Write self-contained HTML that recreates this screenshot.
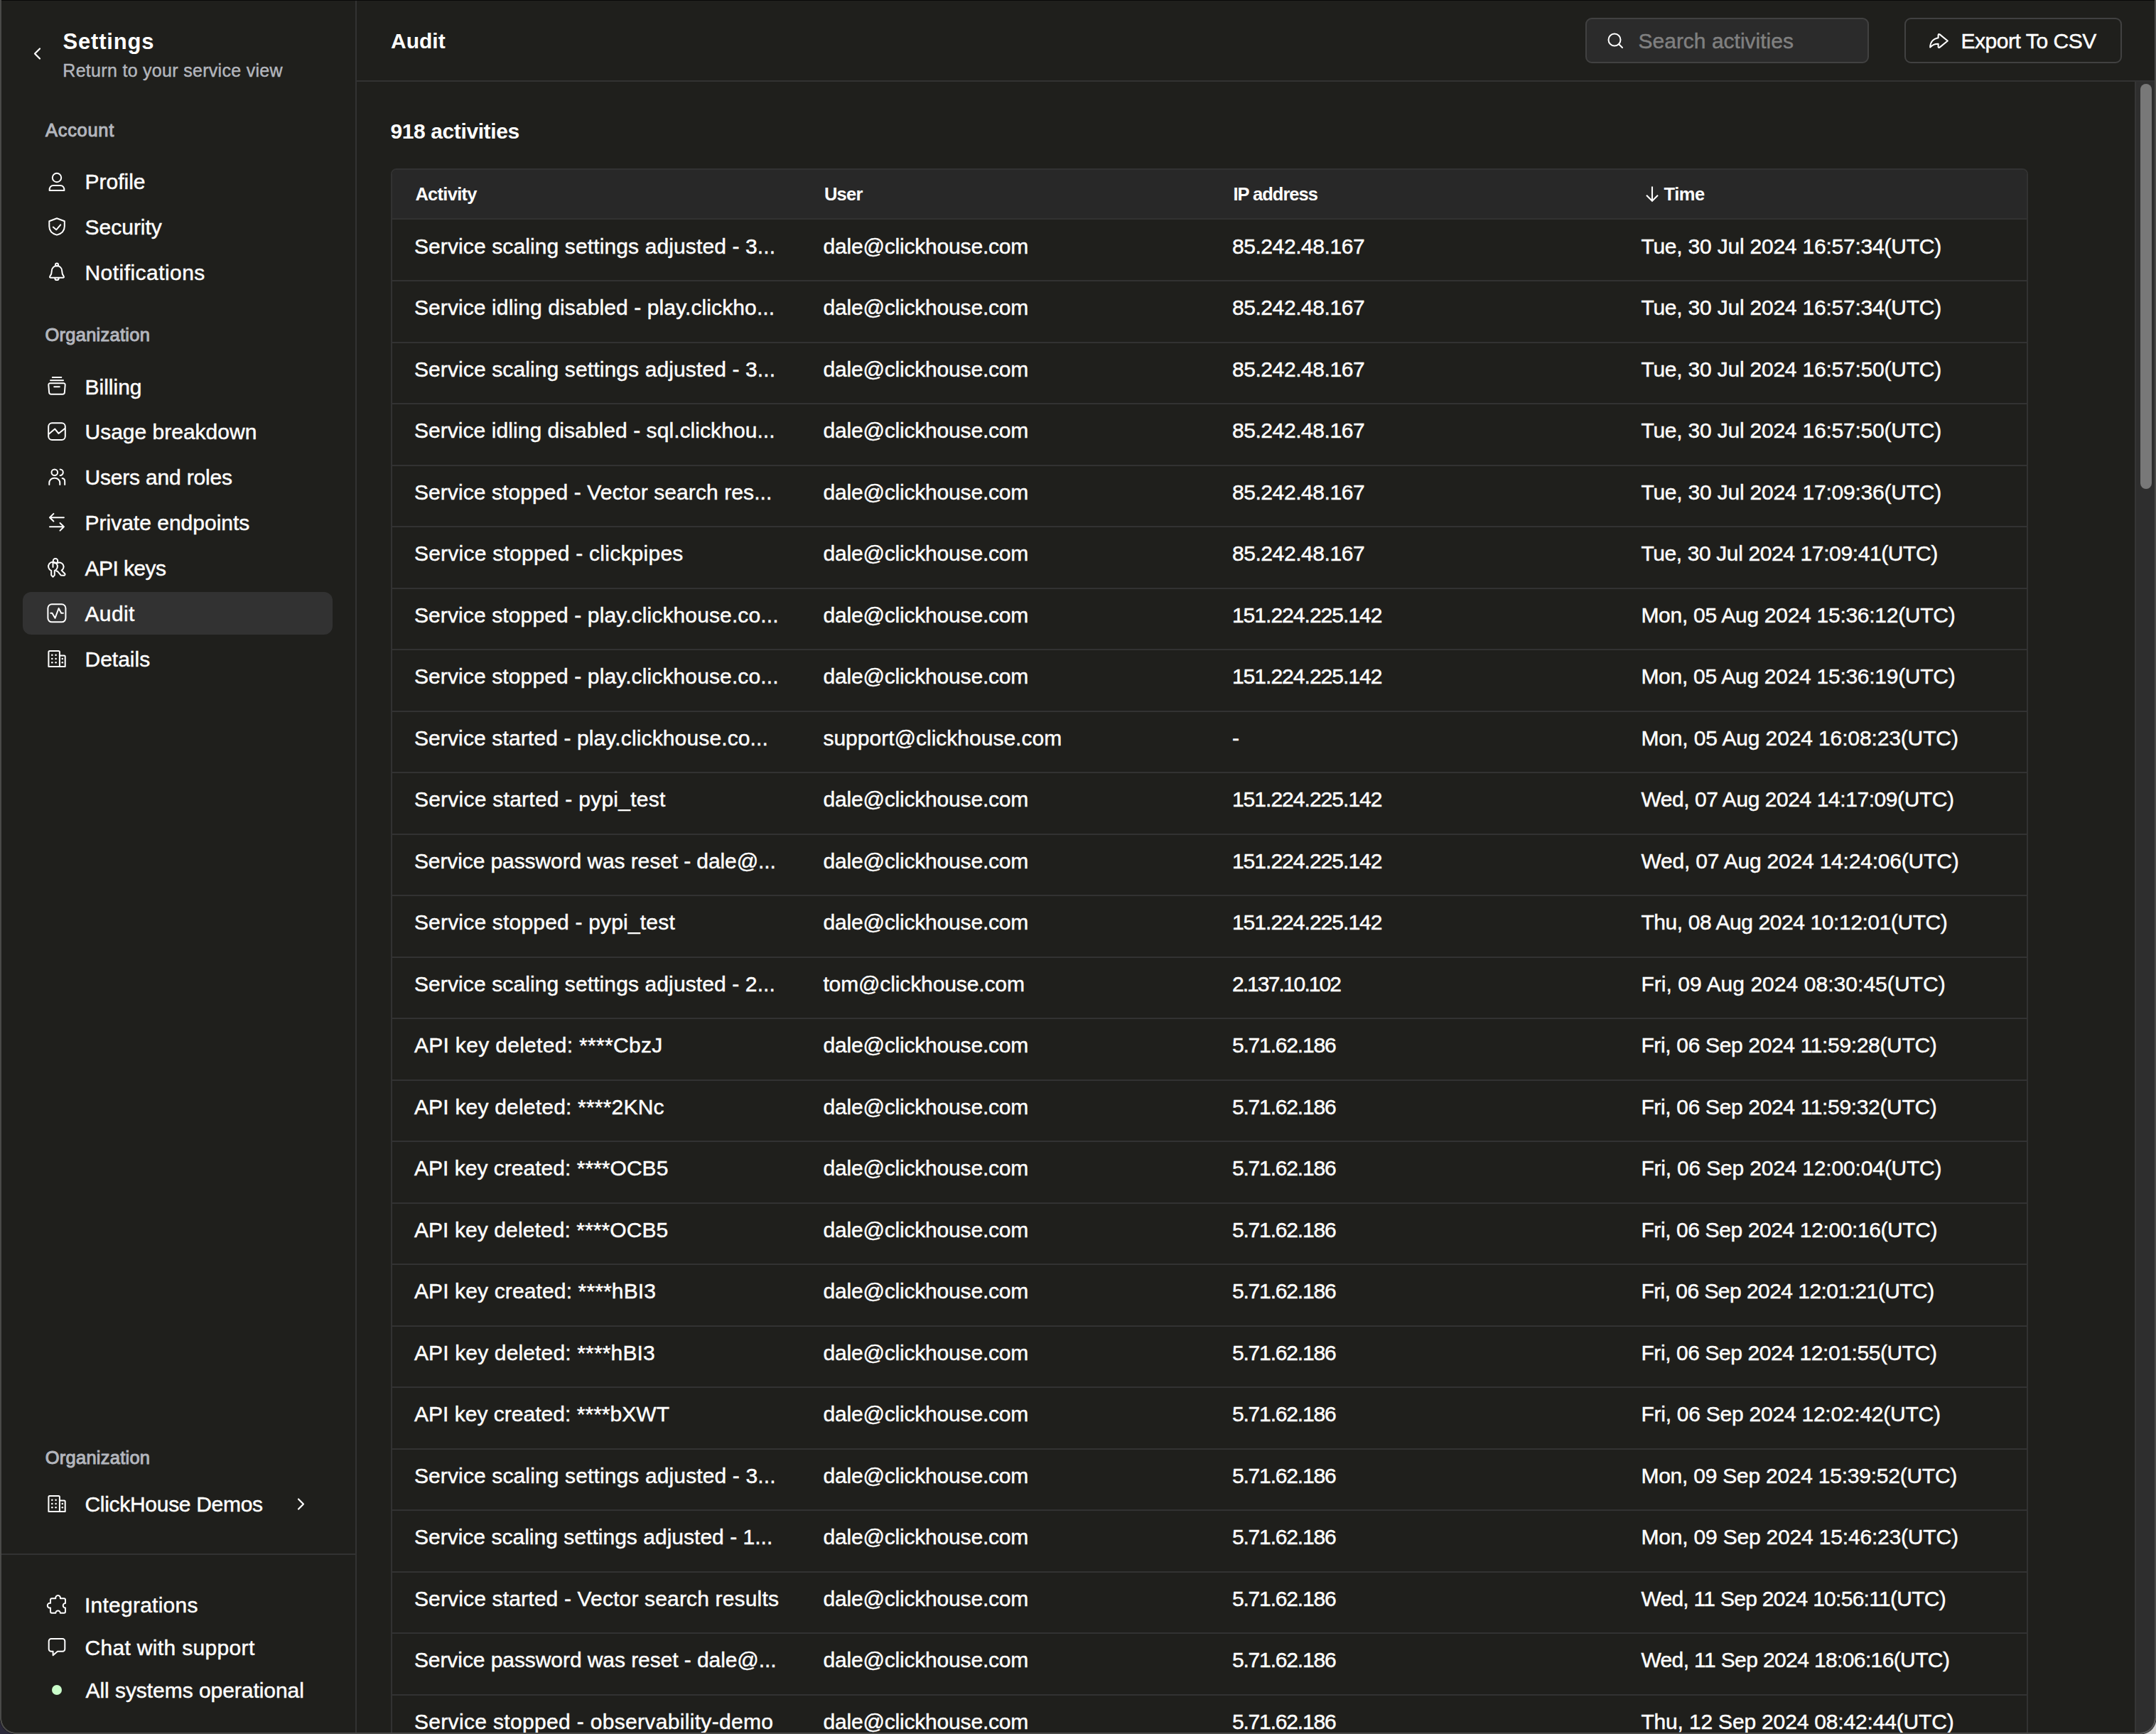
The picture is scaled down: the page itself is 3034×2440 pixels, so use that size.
<!DOCTYPE html>
<html><head><meta charset="utf-8"><style>
html,body{margin:0;padding:0;}
body{width:3034px;height:2440px;position:relative;overflow:hidden;background:#1f1f1c;font-family:"Liberation Sans", sans-serif;}
.t{position:absolute;white-space:nowrap;}
.a{position:absolute;}
svg{position:absolute;overflow:visible;}
</style></head><body>
<div class="a" style="left:500px;top:0;width:2px;height:2440px;background:#323232"></div>
<div class="a" style="left:502px;top:113px;width:2531px;height:2px;background:#323232"></div>
<svg style="left:47px;top:67px" width="11" height="17" viewBox="0 0 11 17"><path d="M9 1.5 L2 8.5 L9 15.5" fill="none" stroke="#fff" stroke-width="2.2" stroke-linecap="round" stroke-linejoin="round"/></svg>
<div class="t" style="left:88.50px;top:38.75px;font-size:31px;line-height:39px;font-weight:700;color:#fff;letter-spacing:0.8px;">Settings</div>
<div class="t" style="left:88.30px;top:83.83px;font-size:25px;line-height:31px;font-weight:400;color:#b3b6bd;letter-spacing:0.3px;-webkit-text-stroke:0.45px #b3b6bd;">Return to your service view</div>
<div class="t" style="left:64.00px;top:167.16px;font-size:25.5px;line-height:32px;font-weight:400;color:#b3b6bd;letter-spacing:0.7px;-webkit-text-stroke:0.45px #b3b6bd;-webkit-text-stroke:1px #b3b6bd;">Account</div>
<div class="t" style="left:119.50px;top:237.10px;font-size:30px;line-height:38px;font-weight:400;color:#fff;letter-spacing:0px;-webkit-text-stroke:0.45px #fff;">Profile</div>
<div class="t" style="left:119.50px;top:301.10px;font-size:30px;line-height:38px;font-weight:400;color:#fff;letter-spacing:0px;-webkit-text-stroke:0.45px #fff;">Security</div>
<div class="t" style="left:119.50px;top:365.10px;font-size:30px;line-height:38px;font-weight:400;color:#fff;letter-spacing:0.45px;-webkit-text-stroke:0.45px #fff;">Notifications</div>
<div class="t" style="left:63.50px;top:455.16px;font-size:25.5px;line-height:32px;font-weight:400;color:#b3b6bd;letter-spacing:0.25px;-webkit-text-stroke:0.45px #b3b6bd;-webkit-text-stroke:1px #b3b6bd;">Organization</div>
<div class="a" style="left:32px;top:833px;width:436px;height:60px;background:#323232;border-radius:12px"></div>
<svg style="left:0;top:0" width="500" height="2440" viewBox="0 0 500 2440">
<g fill="none" stroke="#fff" stroke-width="2" stroke-linecap="round" stroke-linejoin="round">
<circle cx="80" cy="250" r="6.2"/>
<path d="M69.6 267.9 C69.4 263.6 71.4 261.1 75.4 261.1 H84.6 C88.6 261.1 90.6 263.6 90.4 267.9 Z"/>
<path d="M80 307.3 L90.8 311.2 V318.5 C90.8 325 86 329 80 330.6 C74 329 69.3 325 69.3 318.5 V311.2 Z"/>
<path d="M74.8 319.6 L79.2 323.3 L85.2 316.3"/>
<path d="M71.8 390.8 H88.2 Q90.9 390.8 89.5 388.5 C87.8 386.4 87.2 384.5 87.2 381.2 A7.2 7.2 0 0 0 72.8 381.2 C72.8 384.5 72.2 386.4 70.5 388.5 Q69.1 390.8 71.8 390.8 Z"/>
<path d="M77.3 391.2 A2.7 2.9 0 0 0 82.7 391.2"/>
<circle cx="80" cy="372.4" r="2"/>
<path d="M73.8 531 H86.3"/>
<path d="M71 535.2 H89"/>
<path d="M70.5 539.2 H89.5 A2.2 2.2 0 0 1 91.7 541.6 L90.9 552 A3 3 0 0 1 87.9 554.8 H72.1 A3 3 0 0 1 69.1 552 L68.3 541.6 A2.2 2.2 0 0 1 70.5 539.2 Z"/>
<path d="M76.2 544.2 H83.8"/>
<rect x="68.2" y="595.2" width="23.6" height="23.9" rx="5"/>
<path d="M69 610.6 L77.3 603.6 L82.5 610 L91.2 603"/>
<circle cx="76.8" cy="664.8" r="4.3"/>
<path d="M84.6 660.6 A4.2 4.2 0 0 1 84.6 669"/>
<path d="M69.3 682 V679.5 A6.8 6.8 0 0 1 76.1 672.7 H77.5 A6.8 6.8 0 0 1 84.3 679.5 V682"/>
<path d="M87.6 673 A4.3 4.3 0 0 1 91.2 677.4 V682"/>
<path d="M70 728.2 H89.9 M75.4 722.9 L70 728.2 L75.4 733.5"/>
<path d="M70 741.3 H89.9 M84.5 736 L89.9 741.3 L84.5 746.6"/>
<circle cx="78" cy="789.3" r="3.3"/>
<path d="M72.2 803 A6.4 6.4 0 1 1 76.8 803 V809.4 L74.5 811.8 L72.2 809.4 Z"/>
<path d="M74.5 791 V798"/>
<path d="M80.6 792.4 A5.8 5.8 0 1 1 86.6 802.6 L91.2 807.2 A1.6 1.6 0 0 1 89.6 809.8 L85.6 809.4 L81.6 804.6 Q80.5 803.6 79.2 803.6"/>
<rect x="67.4" y="850.3" width="25" height="25" rx="5.5"/>
<path d="M71.3 862.8 H73.4 L77.5 869.8 L82.6 856 L86.2 862.8 H88.9"/>
<path d="M68.4 938 V917.5 A1.5 1.5 0 0 1 69.9 916 H82.4 A1.5 1.5 0 0 1 83.9 917.5 V938 Z"/>
<path d="M83.9 922.5 H90.2 A1.5 1.5 0 0 1 91.7 924 V938 H83.9"/>
<path d="M68.4 2127 V2106.5 A1.5 1.5 0 0 1 69.9 2105 H82.4 A1.5 1.5 0 0 1 83.9 2106.5 V2127 Z"/>
<path d="M83.9 2111.5 H90.2 A1.5 1.5 0 0 1 91.7 2113 V2127 H83.9"/>
<path d="M73 2249.2 H78.3 A3.4 3.4 0 1 1 84.9 2249.2 H90 A2 2 0 0 1 92 2251.2 V2255.9 A3.3 3.3 0 0 0 92 2262.5 V2267.7 A2 2 0 0 1 90 2269.7 H84.9 A3.3 3.3 0 0 0 78.3 2269.7 H73 A2 2 0 0 1 71 2267.7 V2262.5 A3.4 3.4 0 1 1 71 2255.9 V2251.2 A2 2 0 0 1 73 2249.2 Z"/>
<path d="M72 2306 H88 A3.3 3.3 0 0 1 91.3 2309.3 V2320.5 A3.3 3.3 0 0 1 88 2323.8 H81 L74.6 2329.3 V2323.8 H72 A3.3 3.3 0 0 1 68.7 2320.5 V2309.3 A3.3 3.3 0 0 1 72 2306 Z"/>
</g>
<g fill="#fff">
<circle cx="73.3" cy="921.8" r="1.3"/><circle cx="78.6" cy="921.8" r="1.3"/>
<circle cx="73.3" cy="927" r="1.3"/><circle cx="78.6" cy="927" r="1.3"/>
<circle cx="73.3" cy="932.3" r="1.3"/><circle cx="78.6" cy="932.3" r="1.3"/>
<circle cx="87.8" cy="927" r="1.3"/><circle cx="87.8" cy="932.3" r="1.3"/>
<circle cx="73.3" cy="2110.8" r="1.3"/><circle cx="78.6" cy="2110.8" r="1.3"/>
<circle cx="73.3" cy="2116" r="1.3"/><circle cx="78.6" cy="2116" r="1.3"/>
<circle cx="73.3" cy="2121.3" r="1.3"/><circle cx="78.6" cy="2121.3" r="1.3"/>
<circle cx="87.8" cy="2116" r="1.3"/><circle cx="87.8" cy="2121.3" r="1.3"/>
</g>
</svg>
<div class="t" style="left:119.50px;top:525.60px;font-size:30px;line-height:38px;font-weight:400;color:#fff;letter-spacing:0px;-webkit-text-stroke:0.45px #fff;">Billing</div>
<div class="t" style="left:119.50px;top:589.10px;font-size:30px;line-height:38px;font-weight:400;color:#fff;letter-spacing:0px;-webkit-text-stroke:0.45px #fff;">Usage breakdown</div>
<div class="t" style="left:119.50px;top:652.60px;font-size:30px;line-height:38px;font-weight:400;color:#fff;letter-spacing:-0.19px;-webkit-text-stroke:0.45px #fff;">Users and roles</div>
<div class="t" style="left:119.50px;top:717.10px;font-size:30px;line-height:38px;font-weight:400;color:#fff;letter-spacing:0px;-webkit-text-stroke:0.45px #fff;">Private endpoints</div>
<div class="t" style="left:119.50px;top:781.10px;font-size:30px;line-height:38px;font-weight:400;color:#fff;letter-spacing:-0.57px;-webkit-text-stroke:0.45px #fff;">API keys</div>
<div class="t" style="left:119.50px;top:845.10px;font-size:30px;line-height:38px;font-weight:400;color:#fff;letter-spacing:0.35px;-webkit-text-stroke:0.45px #fff;">Audit</div>
<div class="t" style="left:119.50px;top:908.60px;font-size:30px;line-height:38px;font-weight:400;color:#fff;letter-spacing:0px;-webkit-text-stroke:0.45px #fff;">Details</div>
<div class="t" style="left:63.70px;top:2035.16px;font-size:25.5px;line-height:32px;font-weight:400;color:#b3b6bd;letter-spacing:0.25px;-webkit-text-stroke:0.45px #b3b6bd;-webkit-text-stroke:1px #b3b6bd;">Organization</div>
<div class="t" style="left:119.50px;top:2097.60px;font-size:30px;line-height:38px;font-weight:400;color:#fff;letter-spacing:-0.3px;-webkit-text-stroke:0.45px #fff;">ClickHouse Demos</div>
<svg style="left:418px;top:2108px" width="11" height="17" viewBox="0 0 11 17"><path d="M2 1.5 L9 8.5 L2 15.5" fill="none" stroke="#fff" stroke-width="2.2" stroke-linecap="round" stroke-linejoin="round"/></svg>
<div class="a" style="left:2px;top:2186px;width:498px;height:2px;background:#323232"></div>
<div class="t" style="left:119.00px;top:2239.60px;font-size:30px;line-height:38px;font-weight:400;color:#fff;letter-spacing:0.24px;-webkit-text-stroke:0.45px #fff;">Integrations</div>
<div class="t" style="left:119.50px;top:2300.10px;font-size:30px;line-height:38px;font-weight:400;color:#fff;letter-spacing:0.33px;-webkit-text-stroke:0.45px #fff;">Chat with support</div>
<div class="t" style="left:120.50px;top:2359.60px;font-size:30px;line-height:38px;font-weight:400;color:#fff;letter-spacing:-0.05px;-webkit-text-stroke:0.45px #fff;">All systems operational</div>
<div class="a" style="left:73px;top:2371px;width:14px;height:14px;border-radius:50%;background:#cafdca"></div>
<div class="t" style="left:550.00px;top:39.10px;font-size:30px;line-height:38px;font-weight:700;color:#fff;letter-spacing:0px;">Audit</div>
<div class="a" style="left:2231px;top:25px;width:399px;height:64px;box-sizing:border-box;border:2px solid #414141;background:#2b2b2b;border-radius:9px"></div>
<svg style="left:2262px;top:46px" width="24" height="24" viewBox="0 0 24 24"><circle cx="10" cy="10" r="8.5" fill="none" stroke="#fff" stroke-width="2"/><path d="M16.5 16.5 L21 21" stroke="#fff" stroke-width="2" stroke-linecap="round"/></svg>
<div class="t" style="left:2305.50px;top:39.10px;font-size:30px;line-height:38px;font-weight:400;color:#808080;letter-spacing:0px;-webkit-text-stroke:0.45px #808080;">Search activities</div>
<div class="a" style="left:2680px;top:25px;width:306px;height:64px;box-sizing:border-box;border:2px solid #414141;background:transparent;border-radius:9px"></div>
<svg style="left:0;top:0" width="3034" height="120" viewBox="0 0 3034 120"><path d="M2740.8 57.5 L2729.6 48.4 Q2727.6 47.2 2727.6 49.6 V53.3 C2720 54.5 2716.2 60 2716.2 66.5 C2719.5 63 2722.5 61.5 2727.6 61.7 V65.4 Q2727.6 67.8 2729.6 66.6 Z" fill="none" stroke="#fff" stroke-width="2.1" stroke-linejoin="round" stroke-linecap="round"/></svg>
<div class="t" style="left:2759.50px;top:39.10px;font-size:30px;line-height:38px;font-weight:400;color:#fff;letter-spacing:-0.45px;-webkit-text-stroke:0.45px #fff;">Export To CSV</div>
<div class="t" style="left:549.50px;top:166.10px;font-size:30px;line-height:38px;font-weight:700;color:#fff;letter-spacing:-0.4px;">918 activities</div>
<div class="a" style="left:550px;top:237px;width:2304px;height:2300px;box-sizing:border-box;border:2px solid #323232;border-radius:8px;overflow:hidden"><div class="a" style="left:0;top:0;right:0;height:68px;background:#282828;border-bottom:2px solid #323232"></div></div>
<div class="t" style="left:584.40px;top:257.36px;font-size:25.5px;line-height:32px;font-weight:700;color:#fff;letter-spacing:-0.72px;">Activity</div>
<div class="t" style="left:1159.90px;top:257.36px;font-size:25.5px;line-height:32px;font-weight:700;color:#fff;letter-spacing:-0.7px;">User</div>
<div class="t" style="left:1735.40px;top:257.36px;font-size:25.5px;line-height:32px;font-weight:700;color:#fff;letter-spacing:-1.0px;">IP address</div>
<svg style="left:0;top:0" width="3034" height="400" viewBox="0 0 3034 400"><path d="M2325 262.5 V282.5 M2317 274.8 L2325 282.8 L2333 274.8" fill="none" stroke="#fff" stroke-width="2.1" stroke-linecap="butt" stroke-linejoin="miter"/></svg>
<div class="t" style="left:2341.50px;top:257.36px;font-size:25.5px;line-height:32px;font-weight:700;color:#fff;letter-spacing:-0.45px;">Time</div>
<div class="a" style="left:552px;top:394.00px;width:2300px;height:2px;background:#323232"></div>
<div class="t" style="left:582.90px;top:327.60px;font-size:30px;line-height:38px;font-weight:400;color:#fff;letter-spacing:0.118px;-webkit-text-stroke:0.45px #fff;">Service scaling settings adjusted - 3...</div>
<div class="t" style="left:1158.40px;top:327.60px;font-size:30px;line-height:38px;font-weight:400;color:#fff;letter-spacing:-0.183px;-webkit-text-stroke:0.45px #fff;">dale@clickhouse.com</div>
<div class="t" style="left:1733.90px;top:327.60px;font-size:30px;line-height:38px;font-weight:400;color:#fff;letter-spacing:-0.417px;-webkit-text-stroke:0.45px #fff;">85.242.48.167</div>
<div class="t" style="left:2309.40px;top:327.60px;font-size:30px;line-height:38px;font-weight:400;color:#fff;letter-spacing:-0.214px;-webkit-text-stroke:0.45px #fff;">Tue, 30 Jul 2024 16:57:34(UTC)</div>
<div class="a" style="left:552px;top:480.50px;width:2300px;height:2px;background:#323232"></div>
<div class="t" style="left:582.90px;top:414.10px;font-size:30px;line-height:38px;font-weight:400;color:#fff;letter-spacing:0.105px;-webkit-text-stroke:0.45px #fff;">Service idling disabled - play.clickho...</div>
<div class="t" style="left:1158.40px;top:414.10px;font-size:30px;line-height:38px;font-weight:400;color:#fff;letter-spacing:-0.183px;-webkit-text-stroke:0.45px #fff;">dale@clickhouse.com</div>
<div class="t" style="left:1733.90px;top:414.10px;font-size:30px;line-height:38px;font-weight:400;color:#fff;letter-spacing:-0.417px;-webkit-text-stroke:0.45px #fff;">85.242.48.167</div>
<div class="t" style="left:2309.40px;top:414.10px;font-size:30px;line-height:38px;font-weight:400;color:#fff;letter-spacing:-0.214px;-webkit-text-stroke:0.45px #fff;">Tue, 30 Jul 2024 16:57:34(UTC)</div>
<div class="a" style="left:552px;top:567.00px;width:2300px;height:2px;background:#323232"></div>
<div class="t" style="left:582.90px;top:500.60px;font-size:30px;line-height:38px;font-weight:400;color:#fff;letter-spacing:0.118px;-webkit-text-stroke:0.45px #fff;">Service scaling settings adjusted - 3...</div>
<div class="t" style="left:1158.40px;top:500.60px;font-size:30px;line-height:38px;font-weight:400;color:#fff;letter-spacing:-0.183px;-webkit-text-stroke:0.45px #fff;">dale@clickhouse.com</div>
<div class="t" style="left:1733.90px;top:500.60px;font-size:30px;line-height:38px;font-weight:400;color:#fff;letter-spacing:-0.417px;-webkit-text-stroke:0.45px #fff;">85.242.48.167</div>
<div class="t" style="left:2309.40px;top:500.60px;font-size:30px;line-height:38px;font-weight:400;color:#fff;letter-spacing:-0.214px;-webkit-text-stroke:0.45px #fff;">Tue, 30 Jul 2024 16:57:50(UTC)</div>
<div class="a" style="left:552px;top:653.50px;width:2300px;height:2px;background:#323232"></div>
<div class="t" style="left:582.90px;top:587.10px;font-size:30px;line-height:38px;font-weight:400;color:#fff;letter-spacing:0.06px;-webkit-text-stroke:0.45px #fff;">Service idling disabled - sql.clickhou...</div>
<div class="t" style="left:1158.40px;top:587.10px;font-size:30px;line-height:38px;font-weight:400;color:#fff;letter-spacing:-0.183px;-webkit-text-stroke:0.45px #fff;">dale@clickhouse.com</div>
<div class="t" style="left:1733.90px;top:587.10px;font-size:30px;line-height:38px;font-weight:400;color:#fff;letter-spacing:-0.417px;-webkit-text-stroke:0.45px #fff;">85.242.48.167</div>
<div class="t" style="left:2309.40px;top:587.10px;font-size:30px;line-height:38px;font-weight:400;color:#fff;letter-spacing:-0.214px;-webkit-text-stroke:0.45px #fff;">Tue, 30 Jul 2024 16:57:50(UTC)</div>
<div class="a" style="left:552px;top:740.00px;width:2300px;height:2px;background:#323232"></div>
<div class="t" style="left:582.90px;top:673.60px;font-size:30px;line-height:38px;font-weight:400;color:#fff;letter-spacing:0.086px;-webkit-text-stroke:0.45px #fff;">Service stopped - Vector search res...</div>
<div class="t" style="left:1158.40px;top:673.60px;font-size:30px;line-height:38px;font-weight:400;color:#fff;letter-spacing:-0.183px;-webkit-text-stroke:0.45px #fff;">dale@clickhouse.com</div>
<div class="t" style="left:1733.90px;top:673.60px;font-size:30px;line-height:38px;font-weight:400;color:#fff;letter-spacing:-0.417px;-webkit-text-stroke:0.45px #fff;">85.242.48.167</div>
<div class="t" style="left:2309.40px;top:673.60px;font-size:30px;line-height:38px;font-weight:400;color:#fff;letter-spacing:-0.214px;-webkit-text-stroke:0.45px #fff;">Tue, 30 Jul 2024 17:09:36(UTC)</div>
<div class="a" style="left:552px;top:826.50px;width:2300px;height:2px;background:#323232"></div>
<div class="t" style="left:582.90px;top:760.10px;font-size:30px;line-height:38px;font-weight:400;color:#fff;letter-spacing:0.244px;-webkit-text-stroke:0.45px #fff;">Service stopped - clickpipes</div>
<div class="t" style="left:1158.40px;top:760.10px;font-size:30px;line-height:38px;font-weight:400;color:#fff;letter-spacing:-0.183px;-webkit-text-stroke:0.45px #fff;">dale@clickhouse.com</div>
<div class="t" style="left:1733.90px;top:760.10px;font-size:30px;line-height:38px;font-weight:400;color:#fff;letter-spacing:-0.417px;-webkit-text-stroke:0.45px #fff;">85.242.48.167</div>
<div class="t" style="left:2309.40px;top:760.10px;font-size:30px;line-height:38px;font-weight:400;color:#fff;letter-spacing:-0.386px;-webkit-text-stroke:0.45px #fff;">Tue, 30 Jul 2024 17:09:41(UTC)</div>
<div class="a" style="left:552px;top:913.00px;width:2300px;height:2px;background:#323232"></div>
<div class="t" style="left:582.90px;top:846.60px;font-size:30px;line-height:38px;font-weight:400;color:#fff;letter-spacing:0.121px;-webkit-text-stroke:0.45px #fff;">Service stopped - play.clickhouse.co...</div>
<div class="t" style="left:1158.40px;top:846.60px;font-size:30px;line-height:38px;font-weight:400;color:#fff;letter-spacing:-0.183px;-webkit-text-stroke:0.45px #fff;">dale@clickhouse.com</div>
<div class="t" style="left:1733.90px;top:846.60px;font-size:30px;line-height:38px;font-weight:400;color:#fff;letter-spacing:-0.971px;-webkit-text-stroke:0.45px #fff;">151.224.225.142</div>
<div class="t" style="left:2309.40px;top:846.60px;font-size:30px;line-height:38px;font-weight:400;color:#fff;letter-spacing:-0.276px;-webkit-text-stroke:0.45px #fff;">Mon, 05 Aug 2024 15:36:12(UTC)</div>
<div class="a" style="left:552px;top:999.50px;width:2300px;height:2px;background:#323232"></div>
<div class="t" style="left:582.90px;top:933.10px;font-size:30px;line-height:38px;font-weight:400;color:#fff;letter-spacing:0.121px;-webkit-text-stroke:0.45px #fff;">Service stopped - play.clickhouse.co...</div>
<div class="t" style="left:1158.40px;top:933.10px;font-size:30px;line-height:38px;font-weight:400;color:#fff;letter-spacing:-0.183px;-webkit-text-stroke:0.45px #fff;">dale@clickhouse.com</div>
<div class="t" style="left:1733.90px;top:933.10px;font-size:30px;line-height:38px;font-weight:400;color:#fff;letter-spacing:-0.971px;-webkit-text-stroke:0.45px #fff;">151.224.225.142</div>
<div class="t" style="left:2309.40px;top:933.10px;font-size:30px;line-height:38px;font-weight:400;color:#fff;letter-spacing:-0.276px;-webkit-text-stroke:0.45px #fff;">Mon, 05 Aug 2024 15:36:19(UTC)</div>
<div class="a" style="left:552px;top:1086.00px;width:2300px;height:2px;background:#323232"></div>
<div class="t" style="left:582.90px;top:1019.60px;font-size:30px;line-height:38px;font-weight:400;color:#fff;letter-spacing:0.132px;-webkit-text-stroke:0.45px #fff;">Service started - play.clickhouse.co...</div>
<div class="t" style="left:1158.40px;top:1019.60px;font-size:30px;line-height:38px;font-weight:400;color:#fff;letter-spacing:0.007px;-webkit-text-stroke:0.45px #fff;">support@clickhouse.com</div>
<div class="t" style="left:1733.90px;top:1019.60px;font-size:30px;line-height:38px;font-weight:400;color:#fff;letter-spacing:0px;-webkit-text-stroke:0.45px #fff;">-</div>
<div class="t" style="left:2309.40px;top:1019.60px;font-size:30px;line-height:38px;font-weight:400;color:#fff;letter-spacing:-0.131px;-webkit-text-stroke:0.45px #fff;">Mon, 05 Aug 2024 16:08:23(UTC)</div>
<div class="a" style="left:552px;top:1172.50px;width:2300px;height:2px;background:#323232"></div>
<div class="t" style="left:582.90px;top:1106.10px;font-size:30px;line-height:38px;font-weight:400;color:#fff;letter-spacing:0.254px;-webkit-text-stroke:0.45px #fff;">Service started - pypi_test</div>
<div class="t" style="left:1158.40px;top:1106.10px;font-size:30px;line-height:38px;font-weight:400;color:#fff;letter-spacing:-0.183px;-webkit-text-stroke:0.45px #fff;">dale@clickhouse.com</div>
<div class="t" style="left:1733.90px;top:1106.10px;font-size:30px;line-height:38px;font-weight:400;color:#fff;letter-spacing:-0.971px;-webkit-text-stroke:0.45px #fff;">151.224.225.142</div>
<div class="t" style="left:2309.40px;top:1106.10px;font-size:30px;line-height:38px;font-weight:400;color:#fff;letter-spacing:-0.428px;-webkit-text-stroke:0.45px #fff;">Wed, 07 Aug 2024 14:17:09(UTC)</div>
<div class="a" style="left:552px;top:1259.00px;width:2300px;height:2px;background:#323232"></div>
<div class="t" style="left:582.90px;top:1192.60px;font-size:30px;line-height:38px;font-weight:400;color:#fff;letter-spacing:-0.094px;-webkit-text-stroke:0.45px #fff;">Service password was reset - dale@...</div>
<div class="t" style="left:1158.40px;top:1192.60px;font-size:30px;line-height:38px;font-weight:400;color:#fff;letter-spacing:-0.183px;-webkit-text-stroke:0.45px #fff;">dale@clickhouse.com</div>
<div class="t" style="left:1733.90px;top:1192.60px;font-size:30px;line-height:38px;font-weight:400;color:#fff;letter-spacing:-0.971px;-webkit-text-stroke:0.45px #fff;">151.224.225.142</div>
<div class="t" style="left:2309.40px;top:1192.60px;font-size:30px;line-height:38px;font-weight:400;color:#fff;letter-spacing:-0.2px;-webkit-text-stroke:0.45px #fff;">Wed, 07 Aug 2024 14:24:06(UTC)</div>
<div class="a" style="left:552px;top:1345.50px;width:2300px;height:2px;background:#323232"></div>
<div class="t" style="left:582.90px;top:1279.10px;font-size:30px;line-height:38px;font-weight:400;color:#fff;letter-spacing:0.192px;-webkit-text-stroke:0.45px #fff;">Service stopped - pypi_test</div>
<div class="t" style="left:1158.40px;top:1279.10px;font-size:30px;line-height:38px;font-weight:400;color:#fff;letter-spacing:-0.183px;-webkit-text-stroke:0.45px #fff;">dale@clickhouse.com</div>
<div class="t" style="left:1733.90px;top:1279.10px;font-size:30px;line-height:38px;font-weight:400;color:#fff;letter-spacing:-0.971px;-webkit-text-stroke:0.45px #fff;">151.224.225.142</div>
<div class="t" style="left:2309.40px;top:1279.10px;font-size:30px;line-height:38px;font-weight:400;color:#fff;letter-spacing:-0.421px;-webkit-text-stroke:0.45px #fff;">Thu, 08 Aug 2024 10:12:01(UTC)</div>
<div class="a" style="left:552px;top:1432.00px;width:2300px;height:2px;background:#323232"></div>
<div class="t" style="left:582.90px;top:1365.60px;font-size:30px;line-height:38px;font-weight:400;color:#fff;letter-spacing:0.113px;-webkit-text-stroke:0.45px #fff;">Service scaling settings adjusted - 2...</div>
<div class="t" style="left:1158.40px;top:1365.60px;font-size:30px;line-height:38px;font-weight:400;color:#fff;letter-spacing:-0.121px;-webkit-text-stroke:0.45px #fff;">tom@clickhouse.com</div>
<div class="t" style="left:1733.90px;top:1365.60px;font-size:30px;line-height:38px;font-weight:400;color:#fff;letter-spacing:-1.909px;-webkit-text-stroke:0.45px #fff;">2.137.10.102</div>
<div class="t" style="left:2309.40px;top:1365.60px;font-size:30px;line-height:38px;font-weight:400;color:#fff;letter-spacing:0.048px;-webkit-text-stroke:0.45px #fff;">Fri, 09 Aug 2024 08:30:45(UTC)</div>
<div class="a" style="left:552px;top:1518.50px;width:2300px;height:2px;background:#323232"></div>
<div class="t" style="left:582.90px;top:1452.10px;font-size:30px;line-height:38px;font-weight:400;color:#fff;letter-spacing:0.317px;-webkit-text-stroke:0.45px #fff;">API key deleted: ****CbzJ</div>
<div class="t" style="left:1158.40px;top:1452.10px;font-size:30px;line-height:38px;font-weight:400;color:#fff;letter-spacing:-0.183px;-webkit-text-stroke:0.45px #fff;">dale@clickhouse.com</div>
<div class="t" style="left:1733.90px;top:1452.10px;font-size:30px;line-height:38px;font-weight:400;color:#fff;letter-spacing:-1.16px;-webkit-text-stroke:0.45px #fff;">5.71.62.186</div>
<div class="t" style="left:2309.40px;top:1452.10px;font-size:30px;line-height:38px;font-weight:400;color:#fff;letter-spacing:-0.345px;-webkit-text-stroke:0.45px #fff;">Fri, 06 Sep 2024 11:59:28(UTC)</div>
<div class="a" style="left:552px;top:1605.00px;width:2300px;height:2px;background:#323232"></div>
<div class="t" style="left:582.90px;top:1538.60px;font-size:30px;line-height:38px;font-weight:400;color:#fff;letter-spacing:0.2px;-webkit-text-stroke:0.45px #fff;">API key deleted: ****2KNc</div>
<div class="t" style="left:1158.40px;top:1538.60px;font-size:30px;line-height:38px;font-weight:400;color:#fff;letter-spacing:-0.183px;-webkit-text-stroke:0.45px #fff;">dale@clickhouse.com</div>
<div class="t" style="left:1733.90px;top:1538.60px;font-size:30px;line-height:38px;font-weight:400;color:#fff;letter-spacing:-1.16px;-webkit-text-stroke:0.45px #fff;">5.71.62.186</div>
<div class="t" style="left:2309.40px;top:1538.60px;font-size:30px;line-height:38px;font-weight:400;color:#fff;letter-spacing:-0.345px;-webkit-text-stroke:0.45px #fff;">Fri, 06 Sep 2024 11:59:32(UTC)</div>
<div class="a" style="left:552px;top:1691.50px;width:2300px;height:2px;background:#323232"></div>
<div class="t" style="left:582.90px;top:1625.10px;font-size:30px;line-height:38px;font-weight:400;color:#fff;letter-spacing:0.025px;-webkit-text-stroke:0.45px #fff;">API key created: ****OCB5</div>
<div class="t" style="left:1158.40px;top:1625.10px;font-size:30px;line-height:38px;font-weight:400;color:#fff;letter-spacing:-0.183px;-webkit-text-stroke:0.45px #fff;">dale@clickhouse.com</div>
<div class="t" style="left:1733.90px;top:1625.10px;font-size:30px;line-height:38px;font-weight:400;color:#fff;letter-spacing:-1.16px;-webkit-text-stroke:0.45px #fff;">5.71.62.186</div>
<div class="t" style="left:2309.40px;top:1625.10px;font-size:30px;line-height:38px;font-weight:400;color:#fff;letter-spacing:-0.186px;-webkit-text-stroke:0.45px #fff;">Fri, 06 Sep 2024 12:00:04(UTC)</div>
<div class="a" style="left:552px;top:1778.00px;width:2300px;height:2px;background:#323232"></div>
<div class="t" style="left:582.90px;top:1711.60px;font-size:30px;line-height:38px;font-weight:400;color:#fff;letter-spacing:0.092px;-webkit-text-stroke:0.45px #fff;">API key deleted: ****OCB5</div>
<div class="t" style="left:1158.40px;top:1711.60px;font-size:30px;line-height:38px;font-weight:400;color:#fff;letter-spacing:-0.183px;-webkit-text-stroke:0.45px #fff;">dale@clickhouse.com</div>
<div class="t" style="left:1733.90px;top:1711.60px;font-size:30px;line-height:38px;font-weight:400;color:#fff;letter-spacing:-1.16px;-webkit-text-stroke:0.45px #fff;">5.71.62.186</div>
<div class="t" style="left:2309.40px;top:1711.60px;font-size:30px;line-height:38px;font-weight:400;color:#fff;letter-spacing:-0.393px;-webkit-text-stroke:0.45px #fff;">Fri, 06 Sep 2024 12:00:16(UTC)</div>
<div class="a" style="left:552px;top:1864.50px;width:2300px;height:2px;background:#323232"></div>
<div class="t" style="left:582.90px;top:1798.10px;font-size:30px;line-height:38px;font-weight:400;color:#fff;letter-spacing:0.133px;-webkit-text-stroke:0.45px #fff;">API key created: ****hBI3</div>
<div class="t" style="left:1158.40px;top:1798.10px;font-size:30px;line-height:38px;font-weight:400;color:#fff;letter-spacing:-0.183px;-webkit-text-stroke:0.45px #fff;">dale@clickhouse.com</div>
<div class="t" style="left:1733.90px;top:1798.10px;font-size:30px;line-height:38px;font-weight:400;color:#fff;letter-spacing:-1.16px;-webkit-text-stroke:0.45px #fff;">5.71.62.186</div>
<div class="t" style="left:2309.40px;top:1798.10px;font-size:30px;line-height:38px;font-weight:400;color:#fff;letter-spacing:-0.545px;-webkit-text-stroke:0.45px #fff;">Fri, 06 Sep 2024 12:01:21(UTC)</div>
<div class="a" style="left:552px;top:1951.00px;width:2300px;height:2px;background:#323232"></div>
<div class="t" style="left:582.90px;top:1884.60px;font-size:30px;line-height:38px;font-weight:400;color:#fff;letter-spacing:0.15px;-webkit-text-stroke:0.45px #fff;">API key deleted: ****hBI3</div>
<div class="t" style="left:1158.40px;top:1884.60px;font-size:30px;line-height:38px;font-weight:400;color:#fff;letter-spacing:-0.183px;-webkit-text-stroke:0.45px #fff;">dale@clickhouse.com</div>
<div class="t" style="left:1733.90px;top:1884.60px;font-size:30px;line-height:38px;font-weight:400;color:#fff;letter-spacing:-1.16px;-webkit-text-stroke:0.45px #fff;">5.71.62.186</div>
<div class="t" style="left:2309.40px;top:1884.60px;font-size:30px;line-height:38px;font-weight:400;color:#fff;letter-spacing:-0.414px;-webkit-text-stroke:0.45px #fff;">Fri, 06 Sep 2024 12:01:55(UTC)</div>
<div class="a" style="left:552px;top:2037.50px;width:2300px;height:2px;background:#323232"></div>
<div class="t" style="left:582.90px;top:1971.10px;font-size:30px;line-height:38px;font-weight:400;color:#fff;letter-spacing:0.025px;-webkit-text-stroke:0.45px #fff;">API key created: ****bXWT</div>
<div class="t" style="left:1158.40px;top:1971.10px;font-size:30px;line-height:38px;font-weight:400;color:#fff;letter-spacing:-0.183px;-webkit-text-stroke:0.45px #fff;">dale@clickhouse.com</div>
<div class="t" style="left:1733.90px;top:1971.10px;font-size:30px;line-height:38px;font-weight:400;color:#fff;letter-spacing:-1.16px;-webkit-text-stroke:0.45px #fff;">5.71.62.186</div>
<div class="t" style="left:2309.40px;top:1971.10px;font-size:30px;line-height:38px;font-weight:400;color:#fff;letter-spacing:-0.241px;-webkit-text-stroke:0.45px #fff;">Fri, 06 Sep 2024 12:02:42(UTC)</div>
<div class="a" style="left:552px;top:2124.00px;width:2300px;height:2px;background:#323232"></div>
<div class="t" style="left:582.90px;top:2057.60px;font-size:30px;line-height:38px;font-weight:400;color:#fff;letter-spacing:0.128px;-webkit-text-stroke:0.45px #fff;">Service scaling settings adjusted - 3...</div>
<div class="t" style="left:1158.40px;top:2057.60px;font-size:30px;line-height:38px;font-weight:400;color:#fff;letter-spacing:-0.183px;-webkit-text-stroke:0.45px #fff;">dale@clickhouse.com</div>
<div class="t" style="left:1733.90px;top:2057.60px;font-size:30px;line-height:38px;font-weight:400;color:#fff;letter-spacing:-1.16px;-webkit-text-stroke:0.45px #fff;">5.71.62.186</div>
<div class="t" style="left:2309.40px;top:2057.60px;font-size:30px;line-height:38px;font-weight:400;color:#fff;letter-spacing:-0.241px;-webkit-text-stroke:0.45px #fff;">Mon, 09 Sep 2024 15:39:52(UTC)</div>
<div class="a" style="left:552px;top:2210.50px;width:2300px;height:2px;background:#323232"></div>
<div class="t" style="left:582.90px;top:2144.10px;font-size:30px;line-height:38px;font-weight:400;color:#fff;letter-spacing:0.021px;-webkit-text-stroke:0.45px #fff;">Service scaling settings adjusted - 1...</div>
<div class="t" style="left:1158.40px;top:2144.10px;font-size:30px;line-height:38px;font-weight:400;color:#fff;letter-spacing:-0.183px;-webkit-text-stroke:0.45px #fff;">dale@clickhouse.com</div>
<div class="t" style="left:1733.90px;top:2144.10px;font-size:30px;line-height:38px;font-weight:400;color:#fff;letter-spacing:-1.16px;-webkit-text-stroke:0.45px #fff;">5.71.62.186</div>
<div class="t" style="left:2309.40px;top:2144.10px;font-size:30px;line-height:38px;font-weight:400;color:#fff;letter-spacing:-0.186px;-webkit-text-stroke:0.45px #fff;">Mon, 09 Sep 2024 15:46:23(UTC)</div>
<div class="a" style="left:552px;top:2297.00px;width:2300px;height:2px;background:#323232"></div>
<div class="t" style="left:582.90px;top:2230.60px;font-size:30px;line-height:38px;font-weight:400;color:#fff;letter-spacing:0.163px;-webkit-text-stroke:0.45px #fff;">Service started - Vector search results</div>
<div class="t" style="left:1158.40px;top:2230.60px;font-size:30px;line-height:38px;font-weight:400;color:#fff;letter-spacing:-0.183px;-webkit-text-stroke:0.45px #fff;">dale@clickhouse.com</div>
<div class="t" style="left:1733.90px;top:2230.60px;font-size:30px;line-height:38px;font-weight:400;color:#fff;letter-spacing:-1.16px;-webkit-text-stroke:0.45px #fff;">5.71.62.186</div>
<div class="t" style="left:2309.40px;top:2230.60px;font-size:30px;line-height:38px;font-weight:400;color:#fff;letter-spacing:-0.724px;-webkit-text-stroke:0.45px #fff;">Wed, 11 Sep 2024 10:56:11(UTC)</div>
<div class="a" style="left:552px;top:2383.50px;width:2300px;height:2px;background:#323232"></div>
<div class="t" style="left:582.90px;top:2317.10px;font-size:30px;line-height:38px;font-weight:400;color:#fff;letter-spacing:-0.072px;-webkit-text-stroke:0.45px #fff;">Service password was reset - dale@...</div>
<div class="t" style="left:1158.40px;top:2317.10px;font-size:30px;line-height:38px;font-weight:400;color:#fff;letter-spacing:-0.183px;-webkit-text-stroke:0.45px #fff;">dale@clickhouse.com</div>
<div class="t" style="left:1733.90px;top:2317.10px;font-size:30px;line-height:38px;font-weight:400;color:#fff;letter-spacing:-1.16px;-webkit-text-stroke:0.45px #fff;">5.71.62.186</div>
<div class="t" style="left:2309.40px;top:2317.10px;font-size:30px;line-height:38px;font-weight:400;color:#fff;letter-spacing:-0.621px;-webkit-text-stroke:0.45px #fff;">Wed, 11 Sep 2024 18:06:16(UTC)</div>
<div class="a" style="left:552px;top:2470.00px;width:2300px;height:2px;background:#323232"></div>
<div class="t" style="left:582.90px;top:2403.60px;font-size:30px;line-height:38px;font-weight:400;color:#fff;letter-spacing:0.331px;-webkit-text-stroke:0.45px #fff;">Service stopped - observability-demo</div>
<div class="t" style="left:1158.40px;top:2403.60px;font-size:30px;line-height:38px;font-weight:400;color:#fff;letter-spacing:-0.183px;-webkit-text-stroke:0.45px #fff;">dale@clickhouse.com</div>
<div class="t" style="left:1733.90px;top:2403.60px;font-size:30px;line-height:38px;font-weight:400;color:#fff;letter-spacing:-1.16px;-webkit-text-stroke:0.45px #fff;">5.71.62.186</div>
<div class="t" style="left:2309.40px;top:2403.60px;font-size:30px;line-height:38px;font-weight:400;color:#fff;letter-spacing:-0.172px;-webkit-text-stroke:0.45px #fff;">Thu, 12 Sep 2024 08:42:44(UTC)</div>
<div class="a" style="left:3004px;top:115px;width:28px;height:2325px;background:#2e2e2e;border-left:2px solid #363636;box-sizing:border-box"></div>
<div class="a" style="left:3012px;top:118px;width:16px;height:570px;background:#787878;border-radius:8px"></div>
<div class="a" style="left:0;top:0;width:3034px;height:1px;background:#0a0a0a"></div>
<div class="a" style="left:0;top:0;width:2px;height:2440px;background:#4a4a48"></div>
<div class="a" style="left:3032px;top:0;width:2px;height:2440px;background:#4a4a48"></div>
<div class="a" style="left:0;top:2438px;width:3034px;height:2px;background:#4a4a48"></div>
<div class="a" style="left:0;top:2418px;width:22px;height:22px;background:radial-gradient(circle 22px at 100% 0, rgba(0,0,0,0) 19.5px, #4a4a48 20px, #4a4a48 21.5px, #1a1a22 22px, #2a2839 23px)"></div>
<div class="a" style="left:3012px;top:2418px;width:22px;height:22px;background:radial-gradient(circle 22px at 0 0, rgba(0,0,0,0) 19.5px, #555 20px, #555 21.5px, #333 22px, #d5d5d5 23px)"></div>
</body></html>
